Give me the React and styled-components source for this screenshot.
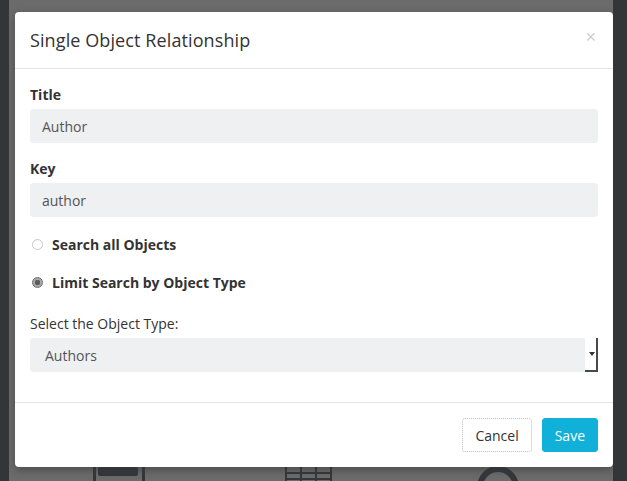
import React, { useState } from 'react';
import styled, { createGlobalStyle } from 'styled-components';

const GlobalStyle = createGlobalStyle`
  html, body {
    margin: 0;
    padding: 0;
    background: #323638;
    font-family: "Open Sans", "Liberation Sans", sans-serif;
    overflow: hidden;
  }
  * { box-sizing: border-box; }
`;

const Page = styled.div`
  width: 627px;
  height: 481px;
  padding-left: 9px;
  display: flex;
`;

const Backdrop = styled.div`
  width: 604px;
  height: 481px;
  background: #6b6b6b;
  padding: 12px 0 0 6px;
  display: flex;
  flex-direction: column;
  overflow: hidden;
`;

const Modal = styled.div`
  width: 598px;
  background: #fff;
  border-radius: 4px;
  box-shadow: 0 3px 9px rgba(0, 0, 0, 0.3);
  flex-shrink: 0;
`;

const Header = styled.div`
  display: flex;
  align-items: center;
  justify-content: space-between;
  padding: 15px;
  border-bottom: 1px solid #e5e5e5;
`;

const H4 = styled.h4`
  margin: 0;
  font-size: 18px;
  font-weight: 400;
  line-height: 26px;
  color: #333;
  letter-spacing: 0.1px;
`;

const Close = styled.button`
  align-self: flex-start;
  margin: 1px 2px 0 0;
  border: 0;
  background: none;
  padding: 0;
  font-size: 18px;
  line-height: 1;
  color: #cfcfcf;
  font-family: "Liberation Sans", sans-serif;
  cursor: pointer;
`;

const Body = styled.div`
  padding: 16px 15px 15px;
  display: flex;
  flex-direction: column;
`;

const Group = styled.div`
  display: flex;
  flex-direction: column;
  margin-bottom: ${p => p.gap || 16}px;
`;

const Label = styled.label`
  font-size: 14px;
  font-weight: ${p => (p.normal ? 400 : 700)};
  line-height: 20px;
  color: #333;
  margin-bottom: 4px;
`;

const Input = styled.input`
  height: 34px;
  border: 1px solid #eef0f2;
  border-radius: 3px;
  background: #eef0f2;
  padding: 0 11px;
  font-family: inherit;
  font-size: 14px;
  color: #555;
  outline: none;
`;

const RadioRow = styled.label`
  display: flex;
  align-items: center;
  gap: 9px;
  height: 20px;
  margin-bottom: ${p => p.gap}px;
  padding-left: 2px;
  font-size: 14px;
  font-weight: 700;
  color: #333;
  cursor: pointer;
`;

const RadioDot = styled.span`
  width: 11px;
  height: 11px;
  border-radius: 50%;
  flex-shrink: 0;
  border: 1px solid ${p => (p.checked ? '#6d6d6d' : '#c8c8c8')};
  background: ${p =>
    p.checked ? 'radial-gradient(circle, #5c5c5c 0 2.5px, #a9a9a9 3px)' : '#fff'};
`;

const SelectWrap = styled.div`
  display: flex;
  height: 34px;
`;

const SelectBox = styled.div`
  flex: 1;
  background: #eef0f2;
  border-radius: 3px 0 0 3px;
  padding: 0 15px;
  display: flex;
  align-items: center;
  font-size: 14px;
  color: #555;
`;

const SelectArrow = styled.div`
  width: 13px;
  border-right: 2px solid #4a4a4a;
  border-bottom: 2px solid #4a4a4a;
  background: #fff;
  display: flex;
  align-items: center;
  justify-content: flex-end;
  padding-right: 1px;

  &::after {
    content: '';
    border-left: 3px solid transparent;
    border-right: 3px solid transparent;
    border-top: 4px solid #333;
  }
`;

const Footer = styled.div`
  display: flex;
  justify-content: flex-end;
  gap: 10px;
  padding: 15px;
  border-top: 1px solid #e5e5e5;
`;

const Button = styled.button`
  height: 34px;
  padding: 0 12px;
  border-radius: 3px;
  font-family: inherit;
  font-size: 14px;
  cursor: pointer;
  border: 1px ${p => (p.primary ? 'solid #10b0d8' : 'dotted #bdbdbd')};
  background: ${p => (p.primary ? '#10b0d8' : '#fff')};
  color: ${p => (p.primary ? '#fff' : '#333')};
`;

const Beneath = styled.svg`
  flex-shrink: 0;
  display: block;
`;

const App = () => {
  const [scope, setScope] = useState('type');

  return (
    <>
      <GlobalStyle />
      <Page>
        <Backdrop>
          <Modal>
            <Header>
              <H4>Single Object Relationship</H4>
              <Close aria-label="Close">×</Close>
            </Header>
            <Body>
              <Group>
                <Label>Title</Label>
                <Input defaultValue="Author" />
              </Group>
              <Group gap={17}>
                <Label>Key</Label>
                <Input defaultValue="author" />
              </Group>
              <RadioRow gap={18} onClick={() => setScope('all')}>
                <RadioDot checked={scope === 'all'} />
                Search all Objects
              </RadioRow>
              <RadioRow gap={22} onClick={() => setScope('type')}>
                <RadioDot checked={scope === 'type'} />
                Limit Search by Object Type
              </RadioRow>
              <Group gap={15}>
                <Label normal>Select the Object Type:</Label>
                <SelectWrap>
                  <SelectBox>Authors</SelectBox>
                  <SelectArrow />
                </SelectWrap>
              </Group>
            </Body>
            <Footer>
              <Button>Cancel</Button>
              <Button primary>Save</Button>
            </Footer>
          </Modal>
          <Beneath width="598" height="20" viewBox="0 0 598 20">
            <g fill="#323638">
              <rect x="78" y="0" width="3" height="20" />
              <rect x="83" y="0" width="40" height="9" rx="2" />
              <rect x="127" y="0" width="3" height="20" />
              <rect x="270" y="0" width="2" height="20" />
              <rect x="285" y="0" width="2" height="20" />
              <rect x="300" y="0" width="2" height="20" />
              <rect x="315" y="0" width="2" height="20" />
              <rect x="270" y="5" width="47" height="2" />
              <rect x="270" y="11" width="47" height="2" />
            </g>
            <circle cx="483" cy="20" r="18" fill="none" stroke="#323638" strokeWidth="6" />
          </Beneath>
        </Backdrop>
      </Page>
    </>
  );
};

export default App;
